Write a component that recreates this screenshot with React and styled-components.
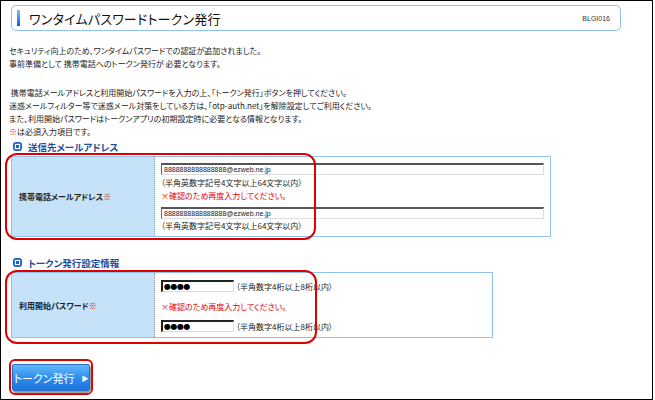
import styled, { createGlobalStyle } from 'styled-components';

const GlobalStyle = createGlobalStyle`
  html, body {
    margin: 0;
    padding: 0;
    background: #fff;
  }
  body {
    font-family: "Noto Sans CJK JP", "Noto Sans", sans-serif;
    color: #222;
  }
`;

function SectionIcon() {
  return (
    <svg width="9" height="9" viewBox="0 0 9 9">
      <rect x="0.5" y="0.5" width="8" height="8" rx="2" fill="#2f7ee0" stroke="#1c5cb8" />
      <rect x="2" y="2" width="5" height="5" fill="#fff" />
      <rect x="3" y="3" width="3" height="3" fill="#1f5fc0" />
    </svg>
  );
}

function Required() {
  return <Mark>※</Mark>;
}

export default function App() {
  return (
    <>
      <GlobalStyle />
      <Frame>
        <Header>
          <HeaderBar />
          <Title>ワンタイムパスワードトークン発行</Title>
          <ScreenId>BLGI016</ScreenId>
        </Header>

        <Intro>
          <p>セキュリティ向上のため、ワンタイムパスワードでの認証が追加されました。</p>
          <p>事前準備として 携帯電話へのトークン発行が 必要となります。</p>
        </Intro>

        <Guide>
          <p>&nbsp;携帯電話メールアドレスと利用開始パスワードを入力の上、「トークン発行」ボタンを押してください。</p>
          <p>迷惑メールフィルター等で迷惑メール対策をしている方は、「otp-auth.net」を解除設定してご利用ください。</p>
          <p>また、利用開始パスワードはトークンアプリの初期設定時に必要となる情報となります。</p>
          <p><Mark>※</Mark>は必須入力項目です。</p>
        </Guide>

        <SectionTitle>
          <SectionIcon />
          送信先メールアドレス
        </SectionTitle>
        <Highlight $top={-3} $bottom={-3} $width={311}>
          <FormTable $width={540}>
            <LabelCell>携帯電話メールアドレス<Required /></LabelCell>
            <ValueCell $padTop={6}>
              <TextBox $width={383}>8888888888888888@ezweb.ne.jp</TextBox>
              <Hint $mt={2}>（半角英数字記号4文字以上64文字以内）</Hint>
              <Notice $mt={1}>×確認のため再度入力してください。</Notice>
              <TextBox $width={383} $mt={4}>8888888888888888@ezweb.ne.jp</TextBox>
              <Hint $mt={1}>（半角英数字記号4文字以上64文字以内）</Hint>
            </ValueCell>
          </FormTable>
        </Highlight>

        <SectionTitle $mt={19}>
          <SectionIcon />
          トークン発行設定情報
        </SectionTitle>
        <Highlight $top={-2} $bottom={-6} $width={312}>
          <FormTable $width={482}>
            <LabelCell>利用開始パスワード<Required /></LabelCell>
            <ValueCell $padTop={7}>
              <InputRow>
                <PassBox>●●●●</PassBox>
                <Hint>（半角数字4桁以上8桁以内）</Hint>
              </InputRow>
              <Notice $mt={8}>×確認のため再度入力してください。</Notice>
              <InputRow $mt={6}>
                <PassBox>●●●●</PassBox>
                <Hint>（半角数字4桁以上8桁以内）</Hint>
              </InputRow>
            </ValueCell>
          </FormTable>
        </Highlight>

        <ButtonArea>
          <IssueButton type="button">
            トークン発行
            <Arrow>▶</Arrow>
          </IssueButton>
        </ButtonArea>
      </Frame>
    </>
  );
}

const Frame = styled.div`
  box-sizing: border-box;
  width: 653px;
  height: 400px;
  border: 1px solid #000;
  padding: 4px 0 0 10px;
  overflow: hidden;
`;

const Header = styled.div`
  box-sizing: border-box;
  width: 610px;
  height: 26px;
  border: 1px solid #8fc1f1;
  border-radius: 5px;
  display: flex;
  align-items: center;
  padding: 0 10px 0 5px;
`;

const HeaderBar = styled.div`
  width: 3px;
  height: 16px;
  background: linear-gradient(#7cc0ff, #0a5fd8);
  margin-right: 9px;
`;

const Title = styled.div`
  font-size: 13px;
  font-feature-settings: "palt";
  letter-spacing: 0.2px;
  color: #111;
  flex: 1;
`;

const ScreenId = styled.div`
  font-family: "Liberation Sans", Arial, sans-serif;
  font-size: 7px;
  color: #333;
`;

const Intro = styled.div`
  margin-top: 13px;
  margin-left: -2px;
  font-size: 8px;
  line-height: 13px;
  font-feature-settings: "palt";
  p {
    margin: 0;
    white-space: nowrap;
  }
`;

const Guide = styled(Intro)`
  margin-top: 16px;
`;

const Mark = styled.span`
  color: #ee0000;
  font-weight: bold;
`;

const SectionTitle = styled.div`
  display: flex;
  align-items: center;
  gap: 6px;
  margin-top: ${(p) => p.$mt ?? 2}px;
  margin-left: 2px;
  height: 13px;
  font-size: 9.5px;
  font-weight: bold;
  font-feature-settings: "palt";
  color: #1b4d9c;
  margin-bottom: 3px;
`;

const Highlight = styled.div`
  position: relative;
  &::after {
    content: "";
    position: absolute;
    left: -6px;
    top: ${(p) => p.$top}px;
    bottom: ${(p) => p.$bottom}px;
    width: ${(p) => p.$width}px;
    box-sizing: border-box;
    border: 2px solid #e10000;
    border-radius: 12px;
    pointer-events: none;
  }
`;

const FormTable = styled.div`
  box-sizing: border-box;
  width: ${(p) => p.$width}px;
  display: grid;
  grid-template-columns: 143px 1fr;
  border: 1px solid #8fc1f1;
`;

const LabelCell = styled.div`
  display: flex;
  align-items: center;
  padding-left: 7px;
  background-color: #e0f1fd;
  background-image: radial-gradient(#c3e1f8 0.7px, transparent 0.8px);
  background-size: 2px 2px;
  border-right: 1px dotted #9a9a9a;
  font-size: 8px;
  font-weight: bold;
  font-feature-settings: "palt";
  color: #222;
`;

const ValueCell = styled.div`
  display: flex;
  flex-direction: column;
  padding: ${(p) => p.$padTop}px 6px 5px 6px;
  font-feature-settings: "palt";
`;

const TextBox = styled.div`
  box-sizing: border-box;
  width: ${(p) => p.$width}px;
  height: 12px;
  margin-top: ${(p) => p.$mt ?? 0}px;
  border-top: 2px solid #555;
  border-left: 1px solid #666;
  border-right: 1px solid #ddd;
  border-bottom: 1px solid #ddd;
  padding-left: 2px;
  font-family: "Liberation Sans", Arial, sans-serif;
  font-size: 7px;
  line-height: 9px;
  color: #222;
`;

const PassBox = styled.div`
  box-sizing: border-box;
  width: 73px;
  height: 12px;
  border-top: 2px solid #222;
  border-left: 2px solid #222;
  border-right: 1px solid #ddd;
  border-bottom: 1px solid #ddd;
  padding-left: 1px;
  font-family: "DejaVu Sans", sans-serif;
  font-size: 8px;
  line-height: 9px;
  letter-spacing: -0.5px;
  color: #000;
`;

const InputRow = styled.div`
  display: flex;
  align-items: center;
  gap: 2px;
  margin-top: ${(p) => p.$mt ?? 0}px;
`;

const Hint = styled.div`
  margin-top: ${(p) => p.$mt ?? 0}px;
  font-size: 8px;
  line-height: 11px;
  white-space: nowrap;
  color: #222;
`;

const Notice = styled.div`
  margin-top: ${(p) => p.$mt ?? 0}px;
  font-size: 8px;
  line-height: 14px;
  color: #e60000;
  white-space: nowrap;
`;

const ButtonArea = styled.div`
  margin-top: 21px;
  margin-left: -2px;
  width: 84px;
  height: 36px;
  box-sizing: border-box;
  border: 2px solid #e10000;
  border-radius: 6px;
  padding: 3px 0 0 1px;
`;

const IssueButton = styled.button`
  box-sizing: border-box;
  width: 78px;
  height: 27px;
  border: 1px solid #2a6fc4;
  border-radius: 2px;
  background: linear-gradient(#63b9fb, #2f8ef0 50%, #1e73dc);
  box-shadow: 1px 2px 1px #9a9a9a;
  color: #fff;
  font-family: "Noto Sans CJK JP", sans-serif;
  font-size: 11px;
  font-feature-settings: "palt";
  display: flex;
  align-items: center;
  justify-content: center;
  gap: 7px;
  padding: 0;
  cursor: pointer;
`;

const Arrow = styled.span`
  font-size: 7px;
`;
